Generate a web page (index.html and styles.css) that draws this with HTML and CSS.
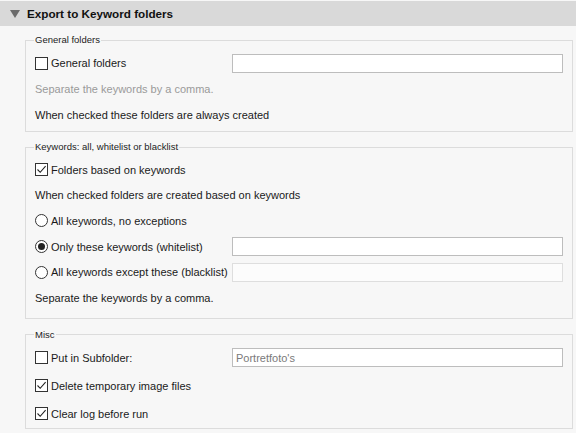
FILE: index.html
```html
<!DOCTYPE html>
<html>
<head>
<meta charset="utf-8">
<link rel="stylesheet" href="styles.css">
</head>
<body>
<div class="panel">
  <div class="header">
    <span class="caret"></span>
    <span class="title">Export to Keyword folders</span>
  </div>
  <div class="content">
    <fieldset class="group g1">
      <legend>General folders</legend>
      <div class="row">
        <label class="opt"><span class="box"></span>General folders</label>
        <span class="input"></span>
      </div>
      <div class="row muted">Separate the keywords by a comma.</div>
      <div class="row">When checked these folders are always created</div>
    </fieldset>

    <fieldset class="group g2">
      <legend>Keywords: all, whitelist or blacklist</legend>
      <div class="row">
        <label class="opt"><span class="box checked"><svg viewBox="0 0 13 13" width="13" height="13"><path d="M2.5 6.5 L5.2 9.3 L10.6 3.2" fill="none" stroke="#222" stroke-width="1.1"/></svg></span>Folders based on keywords</label>
      </div>
      <div class="row">When checked folders are created based on keywords</div>
      <div class="row">
        <label class="opt"><span class="radio"></span>All keywords, no exceptions</label>
      </div>
      <div class="row">
        <label class="opt"><span class="radio on"></span>Only these keywords (whitelist)</label>
        <span class="input"></span>
      </div>
      <div class="row">
        <label class="opt"><span class="radio"></span>All keywords except these (blacklist)</label>
        <span class="input disabled"></span>
      </div>
      <div class="row">Separate the keywords by a comma.</div>
    </fieldset>

    <fieldset class="group g3">
      <legend>Misc</legend>
      <div class="row">
        <label class="opt"><span class="box"></span>Put in Subfolder:</label>
        <span class="input"><span class="placeholder">Portretfoto's</span></span>
      </div>
      <div class="row">
        <label class="opt"><span class="box checked"><svg viewBox="0 0 13 13" width="13" height="13"><path d="M2.5 6.5 L5.2 9.3 L10.6 3.2" fill="none" stroke="#222" stroke-width="1.1"/></svg></span>Delete temporary image files</label>
      </div>
      <div class="row">
        <label class="opt"><span class="box checked"><svg viewBox="0 0 13 13" width="13" height="13"><path d="M2.5 6.5 L5.2 9.3 L10.6 3.2" fill="none" stroke="#222" stroke-width="1.1"/></svg></span>Clear log before run</label>
      </div>
    </fieldset>
  </div>
</div>
</body>
</html>
```

FILE: styles.css
```css
html, body {
  margin: 0;
  padding: 0;
  background: #f7f7f7;
}
body {
  font-family: "Liberation Sans", Arial, sans-serif;
  font-size: 11px;
  color: #1a1a1a;
  width: 576px;
  height: 433px;
  overflow: hidden;
}
.header {
  margin-top: 1px;
  height: 25px;
  background: #d9d9d9;
  display: flex;
  align-items: center;
  padding-left: 10px;
}
.caret {
  width: 0;
  height: 0;
  border-left: 5px solid transparent;
  border-right: 5px solid transparent;
  border-top: 8px solid #6b6b6b;
  margin-right: 7px;
  margin-top: 1px;
}
.title {
  font-weight: bold;
  font-size: 11.7px;
  color: #111;
}
.content {
  padding: 7px 3px 0 25px;
  display: flex;
  flex-direction: column;
}
.group {
  margin: 0;
  border: 1px solid #dcdcdc;
  padding: 0 0 0 9px;
  min-width: 0;
}
.group legend {
  font-size: 9.5px;
  padding: 0 1px;
  margin-left: -1px;
  color: #222;
  line-height: 14px;
}
.g1 { padding-bottom: 3px; }
.g2 { padding-bottom: 7px; margin-top: 8px; }
.g3 { padding-bottom: 1px; margin-top: 9px; }
.row {
  height: 26px;
  display: flex;
  align-items: center;
}
.group .row:first-of-type { margin-top: 3px; }
.g2 .row { height: 25.6px; }
.g3 .row + .row { margin-top: 2px; }
.muted { color: #9a9a9a; }
.opt {
  display: flex;
  align-items: center;
  width: 197px;
  flex: none;
}
.box {
  width: 11px;
  height: 11px;
  border: 1px solid #333;
  background: #fff;
  margin-right: 3px;
  flex: none;
  position: relative;
}
.box svg {
  position: absolute;
  left: -1px;
  top: -1px;
}
.radio {
  width: 11px;
  height: 11px;
  border: 1px solid #333;
  border-radius: 50%;
  background: #fff;
  margin-right: 3px;
  flex: none;
  display: flex;
  align-items: center;
  justify-content: center;
}
.radio.on::after {
  content: "";
  width: 7px;
  height: 7px;
  border-radius: 50%;
  background: #222;
}
.input {
  width: 326px;
  height: 17px;
  border: 1px solid #bdbdbd;
  background: #fff;
  display: flex;
  align-items: center;
  padding-left: 3px;
  box-sizing: content-box;
}
.input.disabled {
  border-color: #dedede;
  background: #fcfcfc;
}
.placeholder {
  color: #7a7a7a;
  font-size: 11px;
}
```
